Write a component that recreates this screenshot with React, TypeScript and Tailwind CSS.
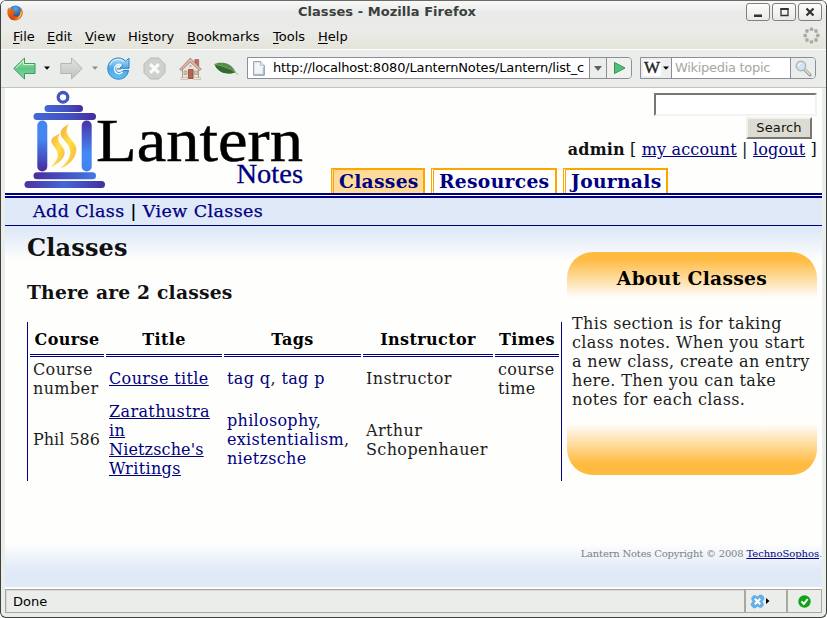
import React from "react";

const sans = "font-['DejaVu_Sans',sans-serif]";
const serif = "font-['DejaVu_Serif',serif]";

function FirefoxIcon() {
  return (
    <svg width="16" height="16" viewBox="0 0 16 16" className="ml-[6px] shrink-0">
      <defs>
        <radialGradient id="globe" cx="0.5" cy="0.25" r="0.7">
          <stop offset="0" stopColor="#5aa9e6" />
          <stop offset="1" stopColor="#17408f" />
        </radialGradient>
        <linearGradient id="fox" x1="0" y1="0" x2="1" y2="1">
          <stop offset="0" stopColor="#e88a1c" />
          <stop offset="0.55" stopColor="#d9480f" />
          <stop offset="1" stopColor="#f2a024" />
        </linearGradient>
      </defs>
      <circle cx="8.4" cy="7.2" r="6.8" fill="url(#globe)" />
      <path d="M1.2 2.4C.2 5 0 8.500 1 10.800 2.500 14.200 5.500 15.700 8.500 15.500 12.800 15.200 15.800 11.800 15.700 7.500 15.600 5.600 15 4.200 14 3.200 14.400 6 13.500 7.300 12.900 8.200 12.600 10.500 11 11.800 8.900 11.600 7.300 11.400 6.300 10.300 6.400 9.300 7.500 9.400 8.600 8.800 8.700 8.100 7.800 7.900 6.900 7.500 6.700 6.700L7.600 5.200 5.200 4.500 3.600 2.900 2.700 3.900Z" fill="url(#fox)" />
      <path d="M13.900 3.800C15.800 8 14.200 13.300 9.300 14.300 12.500 12.500 13.800 9.400 13.900 3.800Z" fill="#ffcf3f" />
      <path d="M1 8.500C1.800 12 4.500 14.800 8.500 14.900 6 15.900 1.800 13.500 1 8.500Z" fill="#b81f0c" />
    </svg>
  );
}

function WindowButton({ children }: { children: React.ReactNode }) {
  return (
    <div className="flex h-[18px] w-[24px] items-center justify-center rounded-[3px] border border-[#7e817c] bg-gradient-to-b from-[#fdfdfc] to-[#e9ebe7]">
      {children}
    </div>
  );
}

function TitleBar() {
  return (
    <div className="flex h-[23px] items-start pt-[2px]">
      <div className="w-[120px] pt-[2px]">
        <FirefoxIcon />
      </div>
      <div className="flex-1 pl-[22px] text-center text-[13px] leading-[17px] font-bold tracking-[0.05px] text-[#3c3e3b]">
        Classes - Mozilla Firefox
      </div>
      <div className="flex w-[195px] justify-end gap-[2px] pr-[4px]">
        <WindowButton>
          <svg width="12" height="12"><path d="M2 8.500h8v2.500H2z" fill="#333" /></svg>
        </WindowButton>
        <WindowButton>
          <svg width="12" height="12"><path d="M3 3h7v6.500H3z" fill="none" stroke="#333" strokeWidth="1.300" /><path d="M2.400 2h8.200v2H2.400z" fill="#333" /></svg>
        </WindowButton>
        <WindowButton>
          <svg width="12" height="12"><path d="M2.500 2.500l7 7M9.500 2.500l-7 7" stroke="#333" strokeWidth="2.200" /></svg>
        </WindowButton>
      </div>
    </div>
  );
}

function Throbber() {
  return (
    <svg width="17" height="17" viewBox="0 0 17 17" fill="#a9aba7">
      <circle cx="8.500" cy="2.200" r="1.900" />
      <circle cx="13" cy="4" r="1.900" />
      <circle cx="14.800" cy="8.500" r="1.900" />
      <circle cx="13" cy="13" r="1.900" />
      <circle cx="8.500" cy="14.800" r="1.900" />
      <circle cx="4" cy="13" r="1.900" />
      <circle cx="2.200" cy="8.500" r="1.900" />
      <circle cx="4" cy="4" r="1.900" />
    </svg>
  );
}

function Key({ children }: { children: React.ReactNode }) {
  return <span className="underline decoration-1 underline-offset-2">{children}</span>;
}

function MenuBar() {
  return (
    <div className="flex h-[26px] items-start border-b border-[#c4c8ba] pl-[12px] text-[13px] leading-[16px] text-black">
      <span className="mt-[5px] w-[34px]"><Key>F</Key>ile</span>
      <span className="mt-[5px] w-[38px]"><Key>E</Key>dit</span>
      <span className="mt-[5px] w-[43px]"><Key>V</Key>iew</span>
      <span className="mt-[5px] w-[59px]">Hi<Key>s</Key>tory</span>
      <span className="mt-[5px] w-[86px]"><Key>B</Key>ookmarks</span>
      <span className="mt-[5px] w-[45px]"><Key>T</Key>ools</span>
      <span className="mt-[5px] flex-1"><Key>H</Key>elp</span>
      <span className="mt-[3px] mr-[6px]"><Throbber /></span>
    </div>
  );
}

function Caret({ className, color }: { className: string; color: string }) {
  return (
    <svg width="6" height="4" viewBox="0 0 6 4" className={"shrink-0 " + className}>
      <path d="M0 .5h6L3 3.800z" fill={color} />
    </svg>
  );
}

function BackIcon() {
  return (
    <svg width="23" height="23" viewBox="0 0 23 23" className="ml-[12px] shrink-0">
      <defs>
        <linearGradient id="bk" x1="0" y1="0" x2="0" y2="1">
          <stop offset="0" stopColor="#b5eaa8" />
          <stop offset="0.5" stopColor="#5fc586" />
          <stop offset="1" stopColor="#7fdc9c" />
        </linearGradient>
      </defs>
      <path d="M.8 11.500L11.500 1v5.500H22v10H11.500V22z" fill="url(#bk)" stroke="#3c9c5f" />
      <path d="M2.500 11.500L10.500 3.500v4H21" fill="none" stroke="#d6f5cc" />
    </svg>
  );
}

function ForwardIcon() {
  return (
    <svg width="23" height="23" viewBox="0 0 23 23" className="ml-[10px] shrink-0">
      <defs>
        <linearGradient id="fw" x1="0" y1="0" x2="0" y2="1">
          <stop offset="0" stopColor="#e2e3e1" />
          <stop offset="1" stopColor="#c0c2bf" />
        </linearGradient>
      </defs>
      <path d="M22.200 11.500L11.500 1v5.500H.8v10h10.700V22z" fill="url(#fw)" stroke="#b5b7b4" />
    </svg>
  );
}

function ReloadIcon() {
  return (
    <svg width="23" height="23" viewBox="0 0 23 23" className="ml-[9px] shrink-0">
      <defs>
        <linearGradient id="rl" x1="0" y1="0" x2="0" y2="1">
          <stop offset="0" stopColor="#b7def5" />
          <stop offset="0.5" stopColor="#4fa6e2" />
          <stop offset="1" stopColor="#62c1f3" />
        </linearGradient>
      </defs>
      <path d="M22 1.200V11.300H12.800l3-3C13.500 6 8.300 7.500 8.300 11.400c0 4.400 5.500 5.600 8 2.100h5.300C20.500 19 16.500 22.200 11.700 22.200 5.300 22.200.8 17.700.8 11.600.8 5.500 5.400 1 11.300 1c3 0 5.300 1.100 7.300 3.200z" fill="url(#rl)" stroke="#2b84cb" />
      <path d="M15.500 15c-3 3.300-8 1.400-8-3.200 0-3.700 4-5.700 7-4" fill="none" stroke="#f2fafe" strokeWidth="1.400" />
      <path d="M9.500 11.800h4.500" stroke="#3b97da" strokeWidth="1.300" />
      <path d="M3 8C5 2.500 12 .5 17 4.500" fill="none" stroke="#dff2fc" />
    </svg>
  );
}

function StopIcon() {
  return (
    <svg width="23" height="23" viewBox="0 0 23 23" className="ml-[13px] shrink-0">
      <path d="M7.300 1h8.400L22 7.300v8.400L15.700 22H7.300L1 15.700V7.300z" fill="#cfd1ce" stroke="#b8bab7" />
      <path d="M7.200 7.200l8.600 8.600M15.800 7.200l-8.600 8.600" stroke="#fbfbfb" strokeWidth="3.200" />
    </svg>
  );
}

function HomeIcon() {
  return (
    <svg width="23" height="23" viewBox="0 0 23 23" className="ml-[13px] shrink-0">
      <path d="M15.800 2.500h3.900v8h-3.900z" fill="#c0685a" stroke="#9c574b" strokeWidth=".6" />
      <path d="M3.500 11.500L11.500 4l8 7.500v10h-16z" fill="#efe1d6" stroke="#a5887a" strokeWidth=".8" />
      <path d="M.7 12.300L11.300 1l11 11.300-1.800 1.200-9.200-8.300-9 8.300z" fill="#d2b9ac" stroke="#98766a" strokeWidth=".7" />
      <path d="M9.500 12.500h4.600v9H9.500z" fill="#b8654f" stroke="#8a4a3b" strokeWidth=".8" />
      <path d="M5 14h3v3.500H5zM15.500 14h3v3.500h-3z" fill="#c6c8c6" stroke="#a08f83" strokeWidth=".6" />
      <path d="M2 20.500h7v2H2zM14.500 20.500h7v2h-7z" fill="#eee9d8" stroke="#b0a087" strokeWidth=".5" />
      <circle cx="11.500" cy="9" r="1.100" fill="#a5adb2" />
    </svg>
  );
}

function LeafIcon() {
  return (
    <svg width="25" height="14" viewBox="0 0 25 14" className="mt-px ml-[12px] shrink-0">
      <path d="M.5 2C7-.5 17 0 21.500 10 14 13.500 3.500 11 .5 2z" fill="#4f8a48" />
      <path d="M.5 2C7 3 15 5 21.500 10 14 13.500 3.500 11 .5 2z" fill="#34692f" />
      <path d="M1 2.200C8 4 16 6 21.500 10.300l2.300 2.400" fill="none" stroke="#86ad6c" strokeWidth=".9" />
      <path d="M7 4l2-2.300M11 5.500L13.500 3M15 7l2-2" stroke="#7aa569" strokeWidth=".6" />
    </svg>
  );
}

function NavBar() {
  return (
    <div className="flex h-[39px] items-center border-t border-b border-t-white border-b-[#c2c6ba] bg-[#ebedea] pb-px">
      <BackIcon />
      <Caret className="ml-[8px]" color="#000" />
      <ForwardIcon />
      <Caret className="ml-[9px]" color="#8c8e8b" />
      <ReloadIcon />
      <StopIcon />
      <HomeIcon />
      <LeafIcon />
      <div className="ml-[8px] flex h-[22px] w-[385px] shrink-0 items-stretch overflow-hidden rounded-r-[4px] border border-[#8b8d99] bg-white">
        <svg width="12" height="15" viewBox="0 0 12 15" className="mt-[3px] ml-[5px] shrink-0">
          <path d="M.7.700h7L11.300 4.300v10H.7z" fill="#f2f5f7" stroke="#8797a5" />
          <path d="M7.700.7v3.600h3.600" fill="#fff" stroke="#a9b1b7" />
          <path d="M1.500 13.300h9.500M10.300 6v7.500" stroke="#9dbacb" />
        </svg>
        <div className="ml-[8px] w-[316px] shrink-0 text-[13px] leading-[20px] tracking-[-0.16px] whitespace-nowrap text-black">
          http://localhost:8080/LanternNotes/Lantern/list_c
        </div>
        <div className="flex w-[18px] items-center justify-center border-r border-l border-[#8b8d99] bg-[#ebedea]">
          <svg width="8" height="5"><path d="M0 0h8L4 5z" fill="#5d605c" /></svg>
        </div>
        <div className="flex flex-1 items-center justify-center bg-[#f0f1ef]">
          <svg width="13" height="14" viewBox="0 0 13 14"><path d="M1.500 1.500L12 7 1.500 12.500z" fill="#55c07c" stroke="#2c9654" /></svg>
        </div>
      </div>
      <div className="ml-[8px] flex h-[22px] w-[176px] shrink-0 items-stretch overflow-hidden rounded-r-[4px] border border-[#8b8d99] bg-white">
        <div className="flex w-[31px] items-center border-r border-[#8b8d99] bg-[#eff0ee]">
          <span className="ml-[2px] flex h-[16px] w-[18px] shrink-0 items-center justify-center bg-white font-['Liberation_Serif',serif] text-[17px] text-[#222] [-webkit-text-stroke:0.4px_#222]">
            W
          </span>
          <Caret className="ml-[2px]" color="#000" />
        </div>
        <div className="flex-1 pl-[3px] text-[13px] leading-[20px] tracking-[-0.3px] whitespace-nowrap text-[#a5a7a3]">Wikipedia topic</div>
        <div className="flex w-[25px] items-center justify-center border-l border-[#8b8d99] bg-[#ebedea]">
          <svg width="17" height="17" viewBox="0 0 17 17">
            <path d="M9.500 9.500l5.500 5.500" stroke="#8e918d" strokeWidth="3" strokeLinecap="round" />
            <path d="M9.700 9.500l5 5" stroke="#e8e9e7" strokeWidth="1.200" strokeLinecap="round" />
            <circle cx="6" cy="6" r="4.700" fill="#cfe5f3" stroke="#b1b6b8" strokeWidth="1.500" />
            <path d="M3.500 6a2.600 2.600 0 0 1 2.600-2.600" fill="none" stroke="#fff" />
          </svg>
        </div>
      </div>
    </div>
  );
}

function Logo() {
  return (
    <svg width="290" height="105" viewBox="20 88 290 105" className="ml-[15px] shrink-0">
      <defs>
        <linearGradient id="bar" x1="0" y1="0" x2="1" y2="0">
          <stop offset="0" stopColor="#4a35a3" />
          <stop offset="0.5" stopColor="#4168d6" />
          <stop offset="1" stopColor="#4330a0" />
        </linearGradient>
        <linearGradient id="bar2" x1="0" y1="0" x2="1" y2="0">
          <stop offset="0" stopColor="#4367d8" />
          <stop offset="0.6" stopColor="#4350be" />
          <stop offset="1" stopColor="#452b9c" />
        </linearGradient>
        <linearGradient id="bar3" x1="0" y1="0" x2="1" y2="0">
          <stop offset="0" stopColor="#492d9b" />
          <stop offset="1" stopColor="#4278e5" />
        </linearGradient>
        <linearGradient id="postL" x1="0" y1="0" x2="0" y2="1">
          <stop offset="0" stopColor="#4386ef" />
          <stop offset="0.35" stopColor="#4487f4" />
          <stop offset="1" stopColor="#472b9d" />
        </linearGradient>
        <linearGradient id="postR" x1="0" y1="0" x2="0" y2="1">
          <stop offset="0" stopColor="#4733a6" />
          <stop offset="0.65" stopColor="#448bf7" />
          <stop offset="1" stopColor="#437ff0" />
        </linearGradient>
        <linearGradient id="flame" x1="0" y1="0" x2="1" y2="1">
          <stop offset="0" stopColor="#f9a93c" />
          <stop offset="0.5" stopColor="#ffe047" />
          <stop offset="1" stopColor="#f6ac3c" />
        </linearGradient>
      </defs>
      <circle cx="63" cy="97.300" r="4.800" fill="none" stroke="#4357c4" strokeWidth="3.300" />
      <rect x="44.500" y="105" width="38.500" height="7" rx="3.500" fill="url(#bar2)" />
      <rect x="33.500" y="113" width="62.500" height="7" rx="3.500" fill="url(#bar2)" />
      <rect x="37.300" y="120.500" width="10" height="51" rx="5" fill="url(#postL)" />
      <rect x="81.700" y="120.500" width="10" height="51" rx="5" fill="url(#postR)" />
      <rect x="33.500" y="172.300" width="62.500" height="7" rx="3.500" fill="url(#bar3)" />
      <rect x="24.500" y="181" width="80.500" height="7" rx="3.500" fill="url(#bar)" />
      <path d="M60.500 133.500c-6 2-10 5-9 8.500 1.500 4.500 8 9 6 15.500-1 3.500-4 6.500-6.500 9.500 6-2.500 13.500-8 13.700-14.500 0-5-5.800-8.200-6.500-13.200-.3-2.200.8-4.200 2.300-5.800z" fill="url(#flame)" />
      <path d="M69 124c-6.500 3-9.500 7-8 11.500 1.500 4.500 9 8.500 9.300 16.500.1 7-5.300 12.300-10.300 16.500 8.500-2.500 16-10.500 16.300-18.500.3-7-7.300-11-9.300-17-1-3 .2-6.500 2-9z" fill="url(#flame)" />
      <text x="96" y="161" textLength="207" lengthAdjust="spacingAndGlyphs" stroke="#000" strokeWidth=".5" className="fill-black font-['Liberation_Serif',serif] text-[61.500px]">Lantern</text>
      <text x="236.500" y="182.500" textLength="66.500" lengthAdjust="spacingAndGlyphs" stroke="#00007f" strokeWidth=".3" className="fill-[#00007f] font-['Liberation_Serif',serif] text-[26.500px]">Notes</text>
    </svg>
  );
}

function Tab({ label, className }: { label: string; className: string }) {
  return (
    <div className={"h-[25px] border-t-2 border-r-2 border-l-[3px] border-[#ffa500] pl-[5px] text-[18.72px] leading-[23px] font-bold tracking-[0.3px] whitespace-nowrap text-[#000080] [border-left-style:double] " + className}>
      {label}
    </div>
  );
}

function Header() {
  return (
    <div className="flex h-[110px] border-b-[5px] border-double border-[#000080] bg-[#fefefd]">
      <Logo />
      <div className="ml-[21px] flex items-end gap-[6px]">
        <Tab label="Classes" className="w-[94px] bg-[#ffdb99]" />
        <Tab label="Resources" className="w-[126px]" />
        <Tab label="Journals" className="w-[105px]" />
      </div>
      <div className="ml-[-100px] flex h-[80px] w-[249px] flex-col items-end pt-[5px] text-[#111]">
        <div className="h-[23px] w-[163px] border-2 border-t-[#777] border-r-[#f2f2f2] border-b-[#f2f2f2] border-l-[#777] bg-white" />
        <button className={"mt-[1px] mr-[5px] h-[22px] w-[66px] border-2 border-t-[#f0f0ec] border-r-[#777] border-b-[#777] border-l-[#f0f0ec] bg-[#dcdcd2] pb-[2px] text-[13px] leading-[15px] tracking-[0.1px] " + sans}>
          Search
        </button>
        <div className="mt-[1px] text-[16px] leading-[19px] tracking-[0.17px] whitespace-nowrap">
          <b>admin</b> [ <a className="text-[#000080] underline">my account</a> | <a className="text-[#000080] underline">logout</a> ]
        </div>
      </div>
    </div>
  );
}

const headings = ["Course", "Title", "Tags", "Instructor", "Times"];
const link = "text-[#000080] underline";
const tag = "text-[#000080]";

function ClassTable() {
  return (
    <table className="mt-[19px] h-[159px] w-[535px] table-fixed border-separate border-spacing-[2px] border-r border-l border-[#000080] text-[16px] leading-[19px] tracking-[0.38px] text-[#1c1c1c]">
      <colgroup>
        <col className="w-[74px]" />
        <col className="w-[116px]" />
        <col className="w-[137px]" />
        <col className="w-[130px]" />
        <col className="w-[64px]" />
      </colgroup>
      <thead>
        <tr className="h-[33px]">
          {headings.map((h) => (
            <th key={h} className="border-b-[3px] border-double border-[#000080] p-0 text-center font-bold text-black">{h}</th>
          ))}
        </tr>
      </thead>
      <tbody>
        <tr className="h-[40px]">
          <td className="px-[3px] py-px">Course number</td>
          <td className="px-[3px] pt-px pb-[3px]"><a className={link}>Course title</a></td>
          <td className="px-[3px] pt-px pb-[3px]"><span className={tag}>tag q</span>, <span className={tag}>tag p</span></td>
          <td className="px-[3px] pt-px pb-[3px]">Instructor</td>
          <td className="px-[3px] py-px">course<br />time</td>
        </tr>
        <tr className="h-[78px]">
          <td className="px-[3px] pt-px pb-[3px] tracking-normal whitespace-nowrap">Phil 586</td>
          <td className="px-[3px] py-px"><a className={link}>Zarathustra<br />in<br /><span className="tracking-[0.15px]">Nietzsche's</span><br />Writings</a></td>
          <td className="px-[3px] pt-px pb-[3px] tracking-[0.3px]"><span className={tag}>philosophy</span>,<br /><span className={tag}>existentialism</span>,<br /><span className={tag}>nietzsche</span></td>
          <td className="px-[3px] py-px">Arthur<br />Schopenhauer</td>
          <td className="px-[3px] py-px" />
        </tr>
      </tbody>
    </table>
  );
}

function AboutPanel() {
  return (
    <aside className="mt-[26px] ml-[5px] flex h-[223px] w-[250px] flex-col overflow-hidden rounded-[26px] bg-[#fefefd]">
      <h3 className="h-[46px] bg-[linear-gradient(to_bottom,#ffba40_0px,#ffba40_7px,#fefefd_46px)] pt-[15px] text-center text-[18.72px] leading-[23px] font-bold tracking-[0.3px] text-black">About Classes</h3>
      <p className="mt-[16px] h-[110px] pl-[5px] text-[16px] leading-[19px] tracking-[0.35px] whitespace-nowrap text-[#1c1c1c]">
        This section is for taking<br />
        class notes. When you start<br />
        a new class, create an entry<br />
        here. Then you can take<br />
        notes for each class.
      </p>
      <div className="flex-1 bg-[linear-gradient(to_bottom,#fefefd_0px,#ffba40_40px)]" />
    </aside>
  );
}

function Page() {
  return (
    <div className={"mx-[4px] flex h-[501px] flex-col bg-[#fefefd] pb-[2px] " + serif}>
      <Header />
      <nav className="h-[28px] border-b border-[#000080] bg-[#dfe9f8] pt-[3px] pl-[28px] text-[17.500px] leading-[20px] tracking-[0.4px] whitespace-nowrap text-[#000080] [-webkit-text-stroke:0.25px_#000080]">
        <a>Add Class</a><b className="mx-[6px] text-[16px] text-black [-webkit-text-stroke:0]">|</b><a>View Classes</a>
      </nav>
      <main className="flex h-[317px] bg-[linear-gradient(to_bottom,#dfe9f8_0px,#dfe9f8_5px,#fefefd_34px)] pl-[22px]">
        <section className="w-[535px] text-[#111]">
          <h2 className="mt-[8px] text-[24px] leading-[28px] font-bold tracking-[0.15px]">Classes</h2>
          <h3 className="mt-[19px] text-[18.72px] leading-[22px] font-bold tracking-[0.2px]">There are 2 classes</h3>
          <ClassTable />
        </section>
        <AboutPanel />
      </main>
      <footer className="flex-1 bg-[linear-gradient(to_bottom,#fefefd_0px,#dfe9f8_28px)] pt-[5px] text-right text-[10px] leading-[12px] tracking-[-0.2px] whitespace-nowrap text-[#808080]">
        Lantern Notes Copyright © 2008 <a className="text-[#000080] tracking-[-0.05px] underline">TechnoSophos</a>.
      </footer>
    </div>
  );
}

function StatusBar() {
  return (
    <div className="mx-[4px] flex h-[24px] border border-[#a6a99b] bg-[#ebedea] text-[13px] leading-[21px] text-black">
      <div className="flex-1 border-t border-l border-[#d8dad2] pl-[6px]">Done</div>
      <div className="flex w-[42px] items-center border-l-2 border-[#a6a99b] pl-[4px]">
        <svg width="15" height="15" viewBox="0 0 15 15">
          <path d="M7.500 2.500L9.500 .8h2.500L14.200 3v2.500L12.500 7.500l1.200 2v2L11.500 13.700h-2L7.500 12.500 5.500 14.200H3.500L.8 11.500V9.500L2.500 7.500 1.300 5.500v-2L3.500 1.300h2z" fill="#63b0e6" />
          <path d="M4.800 4.800l5.400 5.400M10.200 4.800l-5.400 5.400" stroke="#fff" strokeWidth="2" />
        </svg>
        <svg width="4" height="6" className="ml-[1px]"><path d="M0 0l3.500 3L0 6z" fill="#000" /></svg>
      </div>
      <div className="flex w-[35px] items-center justify-center border-l-2 border-[#a6a99b] pr-[1px]">
        <svg width="13" height="13" viewBox="0 0 13 13">
          <circle cx="6.500" cy="6.500" r="6.200" fill="#12a31d" />
          <path d="M3.500 6.300l2.300 2.700L9.700 4" fill="none" stroke="#fff" strokeWidth="2" />
        </svg>
      </div>
    </div>
  );
}

export default function App() {
  return (
    <div className={"flex h-[618px] w-[827px] flex-col overflow-hidden rounded-[6px] border border-t-[#6c6d60] border-r-[#3e403d] border-b-[#3e403d] border-l-[#3e403d] bg-[#ebedea] " + sans}>
      <div className="h-[48px] shrink-0 bg-[linear-gradient(to_bottom,#f7f8f7_0px,#e9ebea_12px,#ebebe8_30px,#e4e4da_48px)]">
        <TitleBar />
        <MenuBar />
      </div>
      <NavBar />
      <Page />
      <StatusBar />
    </div>
  );
}
